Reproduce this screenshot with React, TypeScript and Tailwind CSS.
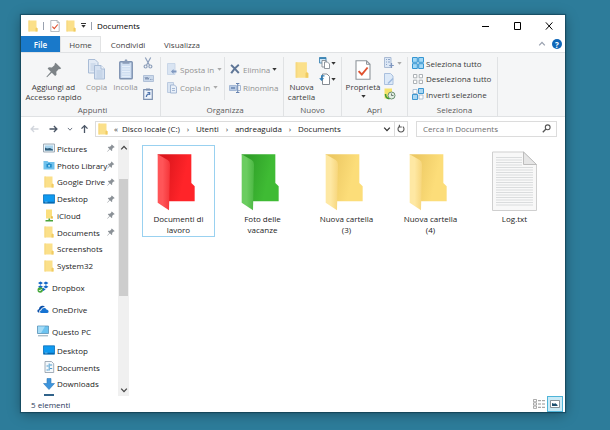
import React from 'react';

interface IconProps {
	className?: string;
}

interface NavEntry {
	label: string;
	icon: React.ReactNode;
	pinned?: boolean;
}

function SmallFolder({ className = 'h-3 w-[10px]' }: IconProps) {
	return (
		<svg viewBox="0 0 10 12" className={className}>
			<path d="M.5.5h8v7l1 1v3h-9z" fill="#fbe08a" />
			<path d="M.5.5h1.2v11H.5z" fill="#f6d880" />
			<path d="M7.5 8.3l1-.8 1 1v3h-2z" fill="#f0cb62" />
		</svg>
	);
}

function CheckDoc({ className = 'h-3 w-[10px]' }: IconProps) {
	return (
		<svg viewBox="0 0 16 20" className={className} fill="none">
			<path
				d="M1 .8h10.5L15 4.3v15H1z"
				fill="#fff"
				stroke="#8f959c"
				strokeWidth="1.1"
			/>
			<path d="M11.5.8v3.5H15" stroke="#8f959c" />
			<path d="M3.6 11.2l3.2 3.3 5.8-7" stroke="#e0512f" strokeWidth="1.9" />
		</svg>
	);
}

function Caret({ className = 'text-[#333]' }: IconProps) {
	return (
		<svg viewBox="0 0 5 3" className={`h-[3px] w-[5px] ${className}`}>
			<path d="M.3 0h4.4L2.5 2.8z" fill="currentColor" />
		</svg>
	);
}

function Chevron({ className = '' }: IconProps) {
	return (
		<svg viewBox="0 0 8 8" className={className} fill="none">
			<path d="M1.2 2.6L4 5.6l2.8-3" stroke="currentColor" strokeWidth="1.3" />
		</svg>
	);
}

function Pin({ className = 'h-2 w-2 text-[#8b9197]' }: IconProps) {
	return (
		<svg viewBox="0 0 16 16" className={className} fill="currentColor">
			<path d="M9.6.8l5.6 5.4-1.3 1.1-1-.2-2.6 2.7.2 3-1.4 1.2-3.3-3.3L1 15.3l-.6-.5 4.4-5L1.6 6.6l1.3-1.3 3 .2L8.7 3 8.5 1.9z" />
		</svg>
	);
}

function Arrow({ className = '' }: IconProps) {
	return (
		<svg viewBox="0 0 9 8" className={className} fill="none">
			<path
				d="M.5 4h7.5M4.9 1l3 3-3 3"
				stroke="currentColor"
				strokeWidth="1.3"
			/>
		</svg>
	);
}

function CopyIcon({ className = 'h-[21px] w-[17px]' }: IconProps) {
	return (
		<svg viewBox="0 0 17 21" className={className} stroke="#a9bcd6" fill="#e2eaf5">
			<path d="M.5.5h6.5l3 3v10.500H.5z" />
			<path d="M2.5 5h5M2.5 7h5M2.5 9h5M2.5 11h5" strokeWidth=".6" />
			<path d="M6.5 6.5h6.5l3.5 3.5v10h-10z" fill="#d5e1f1" />
			<path d="M13 6.5v3.5h3.5" fill="#f4f7fb" />
			<path d="M8.5 12h6M8.5 14h6M8.5 16h6M8.5 18h6" strokeWidth=".6" />
		</svg>
	);
}

function PasteIcon({ className = 'h-[21px] w-[14px]' }: IconProps) {
	return (
		<svg viewBox="0 0 14 21" className={className}>
			<rect x=".8" y="2.8" width="12.4" height="17" rx=".8" fill="#cfdef1" stroke="#7f93b2" strokeWidth="1.5" />
			<path d="M3 7.5h8M3 10h8M3 12.5h8M3 15h8M3 17.4h8" stroke="#e9f1fb" strokeWidth=".9" />
			<path d="M3.5 2.2h2L6 .6h2l.5 1.6h2v2.6h-7z" fill="#8b9cb8" />
		</svg>
	);
}

function ScissorsIcon() {
	return (
		<svg viewBox="0 0 10 12" className="h-3 w-[10px]" fill="none" stroke="#8d9fbb" strokeWidth="1.2">
			<path d="M2.3.5l4.2 7.7M7.7.5L3.5 8.2" />
			<circle cx="2.6" cy="9.5" r="1.5" />
			<circle cx="7.4" cy="9.5" r="1.5" />
		</svg>
	);
}

function PathIcon() {
	return (
		<svg viewBox="0 0 11 7" className="h-[7px] w-[11px]" fill="none">
			<path d="M.5.5h10v6H.5z" fill="#cbd9eb" stroke="#b1c1d8" />
			<path d="M2 2l1 2.5L4 2l1 2.5L6 2.5M7 4.5h.8M8.6 4.5h.8" stroke="#6e83a5" strokeWidth=".8" />
		</svg>
	);
}

function ShortcutIcon() {
	return (
		<svg viewBox="0 0 10 12" className="h-3 w-[10px]" fill="none">
			<path d="M.7 1.7h8.6v9.6H.7z" fill="#edf3fb" stroke="#7d91b0" strokeWidth="1.2" />
			<path d="M3 .5h4v2H3z" fill="#7d91b0" />
			<path d="M3.3 9c0-2 1-2.8 3-3M4.5 4.700h2.200V7" stroke="#4f74ad" strokeWidth="1.2" />
		</svg>
	);
}

function MoveToIcon() {
	return (
		<svg viewBox="0 0 10 12" className="h-3 w-[10px]">
			<path d="M.5.5h7.5v11H.5z" fill="#d9e4f2" stroke="#c3d1e4" strokeWidth=".8" />
			<path d="M4 8.5L6.5 6v1.5h3v2h-3V11z" fill="#7f97bf" />
		</svg>
	);
}

function CopyToIcon() {
	return (
		<svg viewBox="0 0 10 12" className="h-3 w-[10px]" strokeWidth=".9">
			<path d="M.5.5h6v10h-6z" fill="#d9e4f2" stroke="#b7c7de" />
			<path d="M3.5 3h4l2 2v6h-6z" fill="#e9f0f9" stroke="#9db1cf" />
			<path d="M5 6.5h3M5 8.5h3" stroke="#9db1cf" />
		</svg>
	);
}

function DeleteIcon() {
	return (
		<svg viewBox="0 0 10 10" className="h-[10px] w-[10px]" fill="none">
			<path d="M1 1c2 1.5 5 5 7.8 8M8.800.8C6 3 3 6 1.2 9.2" stroke="#5f7697" strokeWidth="2" />
		</svg>
	);
}

function RenameIcon() {
	return (
		<svg viewBox="0 0 12 10" className="h-[10px] w-3" fill="none">
			<path d="M.5 2.5h7v5h-7z" fill="#b9cbe4" stroke="#a5b9d6" />
			<path d="M2 5h4" stroke="#6884b0" strokeWidth="1.5" />
			<path d="M9 2.5h2.5v5H9" stroke="#a5b9d6" />
			<path d="M7 .5h3.4M7 9.5h3.4M8.7.5v9" stroke="#6884b0" />
		</svg>
	);
}

function NewItemIcon() {
	return (
		<svg viewBox="0 0 11 12" className="h-3 w-[11px]" strokeWidth=".9">
			<path d="M.5.5h6.5v5.5H.5z" fill="#cfe6f5" stroke="#3f86b5" />
			<path d="M.5.5h6.5V2H.5z" fill="#3f86b5" />
			<path d="M3 3.5h4v6.5H3z" fill="#fff" stroke="#858b92" />
			<path d="M5.5 5h3l2 2v4.5h-5z" fill="#fff" stroke="#858b92" />
		</svg>
	);
}

function EasyAccessIcon() {
	return (
		<svg viewBox="0 0 11 12" className="h-3 w-[11px]" fill="none">
			<path d="M3.5 1h4.5l2.5 2.5v8h-7z" fill="#fff" stroke="#858b92" />
			<path d="M5.5 2.8H2.6v4M.8 5.2l1.8 2 1.8-2" stroke="#2f7fb8" strokeWidth="1.2" />
		</svg>
	);
}

function OpenIcon() {
	return (
		<svg viewBox="0 0 10 12" className="h-3 w-[10px]" fill="none">
			<path d="M.5.5h6.5v10h-6.5z" fill="#dce7f5" stroke="#aabbd4" />
			<path d="M2 2.5h1M2 5h1M2 7.5h1M4 2.5h2M4 5h2" stroke="#8ea6c9" />
			<path d="M7.5 6v5M5.2 8.5h4.6" stroke="#7f97bf" strokeWidth="1.2" />
		</svg>
	);
}

function EditIcon() {
	return (
		<svg viewBox="0 0 10 12" className="h-3 w-[10px]" fill="none">
			<path d="M.5.5h6l2.5 2.5v8.5H.5z" fill="#dce9f8" stroke="#aac0de" />
			<path d="M3.5 10l5-5 1 1-5 5z" fill="#9db8dd" />
		</svg>
	);
}

function HistoryIcon() {
	return (
		<svg viewBox="0 0 12 12" className="h-3 w-3" fill="none">
			<path d="M.5.5h7.5v10H.5z" fill="#f4e36a" />
			<circle cx="7.5" cy="7.5" r="3.5" fill="#e2eee2" stroke="#6b8f72" />
			<path d="M7.5 5.5v2h2" stroke="#52615a" strokeWidth=".8" />
			<path d="M1.5 6c0 3 1.5 4.6 4 4.8" stroke="#3f9b35" strokeWidth="1.6" />
		</svg>
	);
}

function SelectAllIcon() {
	return (
		<svg viewBox="0 0 12 12" className="h-3 w-3" fill="#a3d8f6" stroke="#3596d2">
			<path d="M.5.5h4.8v4.8H.5zM6.7.5h4.8v4.8H6.7zM.5 6.7h4.8v4.8H.5zM6.7 6.7h4.8v4.8H6.7z" />
		</svg>
	);
}

function DeselectIcon() {
	return (
		<svg viewBox="0 0 12 12" className="h-3 w-3" fill="#fff" stroke="#a3a8ad" strokeWidth=".9">
			<path d="M1.500 1.5h3.3v3.3H1.5zM7.2 1.5h3.3v3.3H7.2zM1.5 7.2h3.3v3.3H1.5zM7.2 7.2h3.3v3.3H7.2z" />
		</svg>
	);
}

function InvertIcon() {
	return (
		<svg viewBox="0 0 12 12" className="h-3 w-3">
			<path d="M1 1.5h4v4H1zM7 7h4v4H7z" fill="#fff" stroke="#9db5cc" strokeWidth=".8" />
			<path d="M6.5.5h5v5h-5zM.5 6.5h5v5h-5z" fill="#a9d7f3" stroke="#3f97d0" />
		</svg>
	);
}

function PicturesIcon() {
	return (
		<svg viewBox="0 0 12 10" className="h-[10px] w-3">
			<path d="M.5 1h11v8H.5z" fill="#eaf3f9" stroke="#8a99a6" strokeWidth=".8" />
			<path d="M2 2.5h8v5H2z" fill="#a9d4ee" />
			<path d="M2 4.5l2 1 3-.5 3 1.5v1H2z" fill="#2c5a78" />
		</svg>
	);
}

function PhotoLibraryIcon() {
	return (
		<svg viewBox="0 0 12 10" className="h-[10px] w-3">
			<path d="M.5 1h4l1 1h6v7.5H.5z" fill="#6fc1ec" />
			<path d="M3.5 4h1.3l.5-.8h1.6l.5.8h1.3v3.6H3.5z" fill="#1f8bc9" />
			<circle cx="6.1" cy="5.8" r="1.1" fill="#a8dcf6" />
		</svg>
	);
}

function DesktopIcon() {
	return (
		<svg viewBox="0 0 12 10" className="h-[10px] w-3">
			<path d="M.5.8h11v8.4H.5z" fill="#0f9af0" stroke="#0b6fb8" strokeWidth=".8" />
			<path d="M1 7.8h10v1H1z" fill="#0a5e9f" />
			<path d="M2 8h2.5" stroke="#9ed8ff" strokeWidth=".6" />
		</svg>
	);
}

function ICloudIcon() {
	return (
		<svg viewBox="0 0 12 13" className="h-[13px] w-3">
			<path d="M3 .5h6v6.500l.8.8V9.5H3z" fill="#fbdf7e" />
			<path d="M8 7.5l1-.5.8.8v1.7H8z" fill="#e7bd4c" />
			<path d="M6.3 9.5v2M2.5 11.8h7.5" stroke="#4aa33c" strokeWidth="1.6" />
		</svg>
	);
}

function DropboxIcon() {
	return (
		<svg viewBox="0 0 12 12" className="h-3 w-3">
			<path
				d="M3.5.5L6 2.1 3.5 3.7 1 2.1zM8.9.5l2.5 1.6-2.5 1.6L6.4 2.1zM3.5 4.2L6 5.8 3.5 7.4 1 5.8zM8.9 4.2l2.5 1.6-2.5 1.6-2.5-1.6zM6.2 6.8l2.5 1.6-2.5 1.7-2.5-1.7z"
				fill="#1267c8"
			/>
			<circle cx="3.2" cy="9" r="2.7" fill="#47a83c" />
			<path d="M1.9 9l1 1 1.7-2" stroke="#fff" strokeWidth=".9" fill="none" />
		</svg>
	);
}

function OneDriveIcon() {
	return (
		<svg viewBox="0 0 12 10" className="h-[10px] w-3">
			<path d="M1.5 8.5C-.2 7.8.2 5.3 2 5.2 2 2 5.8.4 8 3 5 3 4 5 3.8 5.5 2.2 6 2 7.5 2.5 8.5z" fill="#0a4fa8" />
			<path d="M3.8 9C2.5 8.2 3 6.4 4.5 6.3 4.8 3.6 8.5 3.2 9.4 5.5c2.4 0 3 3 .9 3.5z" fill="#1673d2" />
		</svg>
	);
}

function ComputerIcon() {
	return (
		<svg viewBox="0 0 12 12" className="h-3 w-3">
			<path d="M.5 1h11v7.5H.5z" fill="#6cc3f0" stroke="#5b92b5" strokeWidth=".8" />
			<path d="M1 1.4h7L4 8H1z" fill="#a5dcf7" />
			<path d="M1 10.8h10" stroke="#8ba5b5" strokeWidth="1" />
		</svg>
	);
}

function DocumentsIcon() {
	return (
		<svg viewBox="0 0 12 12" className="h-3 w-3">
			<path d="M2 .5h6.5L10.7 2.7v8.8H2z" fill="#f4f8fb" stroke="#8d9ba7" strokeWidth=".8" />
			<path d="M3.5 5h2M7 4h2.2M3.5 9h2M7 7.5h2.2M6.2 2.5v7" stroke="#4d9bcd" strokeWidth="1" />
		</svg>
	);
}

function DownloadsIcon() {
	return (
		<svg viewBox="0 0 12 12" className="h-3 w-3">
			<path d="M4 .5h4v5h3.5L6 11.5.5 5.5H4z" fill="#3d94dc" stroke="#2b78bb" strokeWidth=".6" />
		</svg>
	);
}

const folderColors = {
	red: { back: '#ff2429', dark: '#dc161c', flap: '#ff5558', edge: '#f53539' },
	green: { back: '#3fbb34', dark: '#2f9f28', flap: '#6bcd60', edge: '#4cb843' },
	yellow: { back: '#fcdd79', dark: '#edc964', flap: '#fee8a3', edge: '#f7d67c' },
};

function BigFolder({ color, id }: { color: keyof typeof folderColors; id: string }) {
	const c = folderColors[color];
	return (
		<svg viewBox="0 0 132 171" className="h-[57px] w-11">
			<defs>
				<linearGradient id={`${id}-back`} x1="0" x2="1" y1="0" y2=".3">
					<stop offset=".2" stopColor={c.dark} />
					<stop offset=".8" stopColor={c.back} />
				</linearGradient>
				<linearGradient id={`${id}-flap`}>
					<stop offset=".4" stopColor={c.flap} />
					<stop offset="1" stopColor={c.edge} />
				</linearGradient>
			</defs>
			<path d="M2 1H103V87L113 97V142H34Z" fill={`url(#${id}-back)`} />
			<path d="M2 1L32 18Q39 22 39 32L36 169L2 146Z" fill={`url(#${id}-flap)`} />
		</svg>
	);
}

function TextFile() {
	return (
		<svg viewBox="0 0 45 60" className="h-[60px] w-[45px]">
			<path d="M.5 1h31L44.5 13.5v46H.5z" fill="#f8f8f8" stroke="#cfcfcf" />
			{Array.from({ length: 20 }, (_, i) => (
				<path
					key={i}
					d={`M4 ${6.5 + i * 2.5}h${i < 4 ? 26 : 37}`}
					stroke="#d2d4d6"
					strokeWidth=".8"
				/>
			))}
			<path d="M31.5 1v12.5h13z" fill="#e6e6e6" stroke="#bdbdbd" />
		</svg>
	);
}

const quickAccess: NavEntry[] = [
	{ label: 'Pictures', icon: <PicturesIcon />, pinned: true },
	{ label: 'Photo Library', icon: <PhotoLibraryIcon />, pinned: true },
	{ label: 'Google Drive', icon: <SmallFolder />, pinned: true },
	{ label: 'Desktop', icon: <DesktopIcon />, pinned: true },
	{ label: 'iCloud', icon: <ICloudIcon />, pinned: true },
	{ label: 'Documents', icon: <SmallFolder />, pinned: true },
	{ label: 'Screenshots', icon: <SmallFolder /> },
	{ label: 'System32', icon: <SmallFolder /> },
];

const thisPc: NavEntry[] = [
	{ label: 'Desktop', icon: <DesktopIcon /> },
	{ label: 'Documents', icon: <DocumentsIcon /> },
	{ label: 'Downloads', icon: <DownloadsIcon /> },
];

const crumbs = ['Disco locale (C:)', 'Utenti', 'andreaguida', 'Documents'];

const files = [
	{ name: 'Documenti di lavoro', icon: <BigFolder color="red" id="f1" />, selected: true },
	{ name: 'Foto delle vacanze', icon: <BigFolder color="green" id="f2" /> },
	{ name: 'Nuova cartella (3)', icon: <BigFolder color="yellow" id="f3" /> },
	{ name: 'Nuova cartella (4)', icon: <BigFolder color="yellow" id="f4" /> },
	{ name: 'Log.txt', icon: <TextFile /> },
];

function TitleBar() {
	return (
		<header className="flex h-[21px] items-center pl-[7px] text-black">
			<SmallFolder />
			<span className="ml-[5px] h-2 w-px bg-gray-400" />
			<button aria-label="Proprietà" className="ml-[6px]">
				<CheckDoc />
			</button>
			<button aria-label="Nuova cartella" className="ml-[6px]">
				<SmallFolder />
			</button>
			<button aria-label="Personalizza" className="ml-[5px] flex flex-col items-center gap-px">
				<span className="h-px w-[5px] bg-[#333]" />
				<Caret />
			</button>
			<span className="ml-[5px] h-2 w-px bg-gray-400" />
			<h1 className="ml-[5px]">Documents</h1>
			<div className="ml-auto flex">
				<button aria-label="Riduci" className="flex w-8 justify-center">
					<svg viewBox="0 0 8 8" className="h-2 w-2">
						<path d="M1 4.5h7" stroke="#000" />
					</svg>
				</button>
				<button aria-label="Ingrandisci" className="flex w-8 justify-center">
					<svg viewBox="0 0 8 8" className="h-2 w-2">
						<path d="M1.5.5h6v7h-6z" stroke="#000" fill="none" />
					</svg>
				</button>
				<button aria-label="Chiudi" className="flex w-8 justify-center">
					<svg viewBox="0 0 8 8" className="h-2 w-2">
						<path d="M.9.4l6.500 7.200M7.400.4L.9 7.600" stroke="#000" />
					</svg>
				</button>
			</div>
		</header>
	);
}

function Tabs() {
	return (
		<div className="flex h-4 items-stretch text-[#444]">
			<button className="w-[39px] bg-[#1979ca] font-semibold text-white">File</button>
			<button className="w-[41px] border-x border-t border-[#e2e3e4] bg-[#f5f6f7]">Home</button>
			<button className="w-[54px]">Condividi</button>
			<button className="w-[54px]">Visualizza</button>
			<button aria-label="Riduci barra multifunzione" className="ml-auto">
				<Chevron className="h-2 w-2 rotate-180 text-gray-400" />
			</button>
			<button
				aria-label="Guida"
				className="mr-[3px] ml-[6px] flex h-[10px] w-[10px] items-center justify-center self-center rounded-full bg-[#0f67b8] font-bold text-white"
			>
				?
			</button>
		</div>
	);
}

interface GroupProps {
	title: string;
	className: string;
	children: React.ReactNode;
}

function Group({ title, className, children }: GroupProps) {
	return (
		<section className={`flex shrink-0 flex-col border-r border-[#e0e2e4] ${className}`}>
			<div className="flex flex-1">{children}</div>
			<h2 className="text-center leading-3 text-[#5a5a5a]">{title}</h2>
		</section>
	);
}

interface BigButtonProps {
	icon: React.ReactNode;
	className: string;
	children: React.ReactNode;
}

function BigButton({ icon, className, children }: BigButtonProps) {
	return (
		<button className={`flex shrink-0 flex-col items-center justify-start leading-[10px] ${className}`}>
			<span className="flex h-[25px] items-center">{icon}</span>
			{children}
		</button>
	);
}

function Ribbon() {
	return (
		<div className="flex h-[65px] border-y border-[#e0e2e4] bg-[#f5f6f7] pt-1 text-[#3c3c3c]">
			<Group title="Appunti" className="w-[140px] pl-1">
				<BigButton icon={<Pin className="h-4 w-4 text-[#7d8387]" />} className="w-[57px] whitespace-nowrap">
					<span>Aggiungi ad</span>
					<span>Accesso rapido</span>
				</BigButton>
				<BigButton icon={<CopyIcon />} className="w-[29px] text-[#929292]">
					<span>Copia</span>
				</BigButton>
				<BigButton icon={<PasteIcon />} className="w-[29px] text-[#929292]">
					<span>Incolla</span>
				</BigButton>
				<div className="flex h-[43px] w-4 flex-col items-center justify-between">
					<button aria-label="Taglia" className="flex h-3 items-center">
						<ScissorsIcon />
					</button>
					<button aria-label="Copia percorso" className="flex h-3 items-center">
						<PathIcon />
					</button>
					<button aria-label="Incolla collegamento" className="flex h-3 items-center">
						<ShortcutIcon />
					</button>
				</div>
			</Group>
			<Group title="Organizza" className="w-[123px] pl-[6px] text-[#929292]">
				<div className="flex h-[43px] w-[58px] flex-col justify-evenly border-r border-[#e0e2e4]">
					<button className="flex items-center gap-[3px]">
						<MoveToIcon /> Sposta in <Caret className="text-[#aaa]" />
					</button>
					<button className="flex items-center gap-[3px]">
						<CopyToIcon /> Copia in <Caret className="text-[#aaa]" />
					</button>
				</div>
				<div className="flex h-[43px] flex-col justify-evenly pl-1">
					<button className="flex h-3 items-center gap-[2px]">
						<span className="flex w-3 justify-center">
							<DeleteIcon />
						</span>
						Elimina <Caret />
					</button>
					<button className="flex h-3 items-center gap-[2px]">
						<RenameIcon /> Rinomina
					</button>
				</div>
			</Group>
			<Group title="Nuovo" className="w-[58px]">
				<BigButton icon={<SmallFolder className="h-5 w-[14px]" />} className="w-[35px]">
					<span>Nuova</span>
					<span>cartella</span>
				</BigButton>
				<div className="flex h-7 flex-col justify-between">
					<button aria-label="Nuovo elemento" className="flex items-center gap-px">
						<NewItemIcon />
						<Caret />
					</button>
					<button aria-label="Accesso facilitato" className="flex items-center gap-px">
						<EasyAccessIcon />
						<Caret />
					</button>
				</div>
			</Group>
			<Group title="Apri" className="w-[66px]">
				<BigButton icon={<CheckDoc className="h-[22px] w-4" />} className="w-[42px]">
					<span>Proprietà</span>
					<span className="flex h-[9px] items-center">
						<Caret />
					</span>
				</BigButton>
				<div className="flex h-[43px] flex-col justify-between">
					<button aria-label="Apri" className="flex items-center gap-[3px]">
						<OpenIcon />
						<Caret className="text-[#aaa]" />
					</button>
					<button aria-label="Modifica">
						<EditIcon />
					</button>
					<button aria-label="Cronologia">
						<HistoryIcon />
					</button>
				</div>
			</Group>
			<Group title="Seleziona" className="w-[90px] pl-1">
				<div className="flex h-[43px] flex-col justify-between whitespace-nowrap">
					<button className="flex items-center gap-[2px]">
						<SelectAllIcon /> Seleziona tutto
					</button>
					<button className="flex items-center gap-[2px]">
						<DeselectIcon /> Deseleziona tutto
					</button>
					<button className="flex items-center gap-[2px]">
						<InvertIcon /> Inverti selezione
					</button>
				</div>
			</Group>
		</div>
	);
}

function AddressBar() {
	return (
		<div className="flex h-[23px] items-center pr-2 pl-[9px] text-[#333]">
			<button aria-label="Indietro">
				<Arrow className="h-2 w-[9px] rotate-180 text-gray-300" />
			</button>
			<button aria-label="Avanti" className="ml-[10px]">
				<Arrow className="h-2 w-[9px] text-gray-600" />
			</button>
			<button aria-label="Percorsi recenti" className="ml-[9px]">
				<Chevron className="h-[6px] w-[6px] text-gray-500" />
			</button>
			<button aria-label="Su" className="ml-[7px]">
				<Arrow className="h-2 w-[9px] -rotate-90 text-gray-600" />
			</button>
			<nav
				aria-label="Percorso"
				className="ml-[6px] flex h-4 flex-1 items-center border border-[#dcdcdc] pl-[2px] whitespace-nowrap"
			>
				<SmallFolder />
				<span className="ml-[6px] w-2">«</span>
				{crumbs.map((crumb, index) => (
					<React.Fragment key={crumb}>
						{index > 0 && <span className="w-4 text-center">›</span>}
						<a href="#" className="text-[#1c1c1c]">
							{crumb}
						</a>
					</React.Fragment>
				))}
				<button aria-label="Percorsi precedenti" className="mr-[3px] ml-auto">
					<Chevron className="h-2 w-2" />
				</button>
				<button
					aria-label="Aggiorna"
					className="flex h-full w-[13px] items-center justify-center border-l border-[#dcdcdc]"
				>
					<svg viewBox="0 0 8 9" className="h-[9px] w-2" fill="none" stroke="#555">
						<path d="M5.8 2.6A3 3 0 1 1 2.2 2.600" strokeWidth="1.1" />
						<path d="M2.400.8v2.200h2.400" strokeWidth="1.1" />
					</svg>
				</button>
			</nav>
			<label className="ml-2 flex h-4 w-[141px] items-center border border-[#dcdcdc] pr-[5px] pl-[6px]">
				<input
					type="text"
					aria-label="Cerca in Documents"
					placeholder="Cerca in Documents"
					className="min-w-0 flex-1 outline-none placeholder:text-[#6e6e6e]"
				/>
				<svg viewBox="0 0 9 9" className="h-[9px] w-[9px]" fill="none" stroke="#555">
					<circle cx="5.7" cy="3.3" r="2.4" strokeWidth="1.1" />
					<path d="M4 5L.8 8.2" strokeWidth="1.3" />
				</svg>
			</label>
		</div>
	);
}

function NavItem({ entry }: { entry: NavEntry }) {
	return (
		<li className="flex min-h-0 flex-1 items-center pr-[3px] pl-[22px]">
			<a href="#" className="flex flex-1 items-center gap-[2px] whitespace-nowrap">
				<span className="flex w-3 justify-center">{entry.icon}</span>
				{entry.label}
			</a>
			{entry.pinned && <Pin />}
		</li>
	);
}

function RootItem({ entry }: { entry: NavEntry }) {
	return (
		<a href="#" className="flex h-[22px] items-center gap-[3px] pl-4">
			<span className="flex w-3 justify-center">{entry.icon}</span>
			{entry.label}
		</a>
	);
}

function Sidebar() {
	return (
		<aside className="flex w-[108px] shrink-0 text-[#1c1c1c]">
			<nav aria-label="Riquadro di spostamento" className="flex-1 overflow-hidden">
				<ul className="flex h-[134px] flex-col">
					{quickAccess.map(entry => (
						<NavItem key={entry.label} entry={entry} />
					))}
				</ul>
				<div className="pt-[2px]">
					<RootItem entry={{ label: 'Dropbox', icon: <DropboxIcon /> }} />
					<RootItem entry={{ label: 'OneDrive', icon: <OneDriveIcon /> }} />
					<RootItem entry={{ label: 'Questo PC', icon: <ComputerIcon /> }} />
				</div>
				<ul className="flex h-[50px] flex-col">
					{thisPc.map(entry => (
						<NavItem key={entry.label} entry={entry} />
					))}
				</ul>
				<div className="mt-[2px] ml-[23px] h-2 w-[10px] bg-[#31638a]" />
			</nav>
			<div className="flex w-[11px] flex-col items-center bg-[#f0f0f0] text-[#444]">
				<Chevron className="mt-1 h-2 w-2 shrink-0 rotate-180" />
				<div className="mt-[27px] h-[117px] w-[9px] bg-[#cdcdcd]" />
				<Chevron className="mt-auto mb-[2px] h-2 w-2 shrink-0" />
			</div>
		</aside>
	);
}

function FileGrid() {
	return (
		<main className="flex-1 pt-[5px] pl-[13px]">
			<ul className="flex flex-wrap gap-x-[11px]">
				{files.map(file => (
					<li key={file.name}>
						<button
							className={`flex h-[92px] w-[73px] flex-col items-center justify-start border px-2 text-center text-[#1c1c1c] ${
								file.selected ? 'border-[#99d1f0]' : 'border-transparent'
							}`}
						>
							<span className="mb-[2px] flex h-[65px] items-end">{file.icon}</span>
							{file.name}
						</button>
					</li>
				))}
			</ul>
		</main>
	);
}

function StatusBar() {
	return (
		<footer className="flex h-4 shrink-0 items-center pr-[2px] pl-[10px] text-[#2b3a5c]">
			5 elementi
			<button aria-label="Dettagli" className="mr-[2px] ml-auto">
				<svg viewBox="0 0 12 10" className="h-[10px] w-3" fill="none" stroke="#888">
					<path d="M.5.5h3v2.3h-3zM.5 3.8h3v2.3h-3zM.5 7.1h3v2.3h-3z" strokeWidth=".7" />
					<path d="M5 1.7h3M5 5h3M5 8.3h3M9 1.7h3M9 5h3M9 8.3h3" strokeWidth=".9" />
				</svg>
			</button>
			<button
				aria-label="Icone grandi"
				className="flex h-4 w-4 items-center justify-center border border-[#4fb4d8] bg-[#c9eaf6]"
			>
				<svg viewBox="0 0 10 8" className="h-2 w-[10px]">
					<path d="M.5.5h9v7h-9z" fill="#fff" stroke="#6f7a80" strokeWidth=".8" />
					<path d="M2 3l2 .8 1.5-.5L7.5 5v1H2z" fill="#1d4f6e" />
				</svg>
			</button>
		</footer>
	);
}

export default function App() {
	return (
		<div className="flex h-screen bg-[#2d7c9a] pt-[15px] pr-[45px] pb-[18px] pl-[21px] font-['Open_Sans','Noto_Sans',sans-serif] text-[8px] leading-[11px]">
			<div className="flex min-w-0 flex-1 flex-col bg-white shadow-[0_2px_12px_rgba(0,0,0,0.35),0_0_1px_1px_rgba(0,40,60,0.4)]">
				<TitleBar />
				<Tabs />
				<Ribbon />
				<AddressBar />
				<div className="flex min-h-0 flex-1">
					<Sidebar />
					<FileGrid />
				</div>
				<StatusBar />
			</div>
		</div>
	);
}
